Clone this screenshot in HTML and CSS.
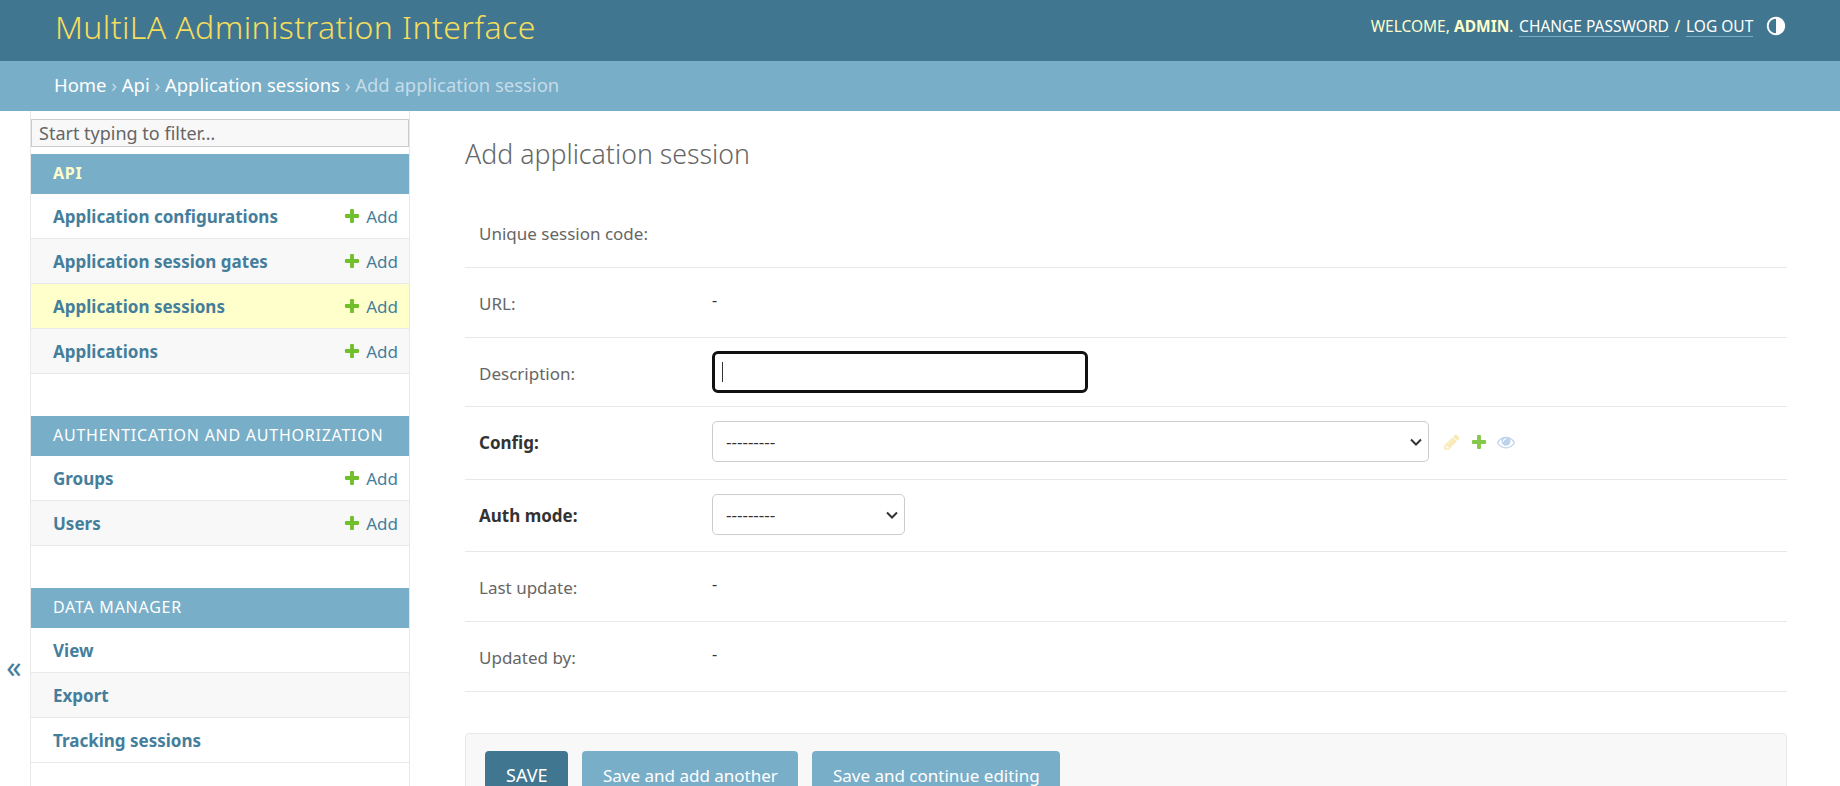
FILE: index.html
```html
<!DOCTYPE html>
<html>
<head>
    <meta charset="utf-8">
    <title>Add application session | MultiLA Administration Interface</title>
    <link rel="stylesheet" href="styles.css">
</head>
<body>
    <svg class="defs" width="0" height="0">
        <symbol id="i-add" viewBox="0 0 1792 1792"><path d="M1600 796v192q0 40-28 68t-68 28h-416v416q0 40-28 68t-68 28h-192q-40 0-68-28t-28-68v-416h-416q-40 0-68-28t-28-68v-192q0-40 28-68t68-28h416v-416q0-40 28-68t68-28h192q40 0 68 28t28 68v416h416q40 0 68 28t28 68z"/></symbol>
        <symbol id="i-change" viewBox="0 0 1792 1792"><path d="M491 1536l91-91-235-235-91 91v107h128v128h107zm523-928q0-22-22-22-10 0-17 7l-542 542q-7 7-7 17 0 22 22 22 10 0 17-7l542-542q7-7 7-17zm-54-192l416 416-832 832h-416v-416zm683 96q0 53-37 90l-166 166-416-416 166-165q36-38 90-38 53 0 91 38l235 234q37 39 37 91z"/></symbol>
        <symbol id="i-view" viewBox="0 0 1792 1792"><path d="M1664 960q-152-236-381-353 61 104 61 225 0 185-131.5 316.5t-316.5 131.5-316.5-131.5-131.5-316.5q0-121 61-225-229 117-381 353 133 205 333.5 326.5t434.5 121.5 434.5-121.5 333.5-326.5zm-720-384q0-20-14-34t-34-14q-125 0-214.5 89.5t-89.5 214.5q0 20 14 34t34 14 34-14 14-34q0-86 61-147t147-61q20 0 34-14t14-34zm848 384q0 34-20 69-140 230-376.5 368.5t-499.5 138.5-499.5-139-376.5-368q-20-35-20-69t20-69q140-229 376.5-368t499.5-139 499.5 139 376.5 368q20 35 20 69z"/></symbol>
    </svg>

    <header class="topbar">
        <h1 class="brand">MultiLA Administration Interface</h1>
        <div class="usertools">
            <span>Welcome, <strong>admin</strong>.</span>
            <a href="#">Change password</a>
            <span>/</span>
            <a href="#">Log out</a>
            <svg class="theme" viewBox="0 0 24 24"><path d="M12 22C6.477 22 2 17.523 2 12S6.477 2 12 2s10 4.477 10 10-4.477 10-10 10zm0-2V4a8 8 0 1 0 0 16z"/></svg>
        </div>
    </header>

    <nav class="crumbs">
        <a href="#">Home</a> › <a href="#">Api</a> › <a href="#">Application sessions</a> › Add application session
    </nav>

    <div class="main">
        <button class="toggle">«</button>
        <aside class="sidebar">
            <input class="filter" type="text" placeholder="Start typing to filter…">

            <section class="module">
                <h2 class="caption current">API</h2>
                <div class="item"><a class="model" href="#">Application configurations</a><a class="add" href="#"><svg class="icon"><use href="#i-add"/></svg>Add</a></div>
                <div class="item"><a class="model" href="#">Application session gates</a><a class="add" href="#"><svg class="icon"><use href="#i-add"/></svg>Add</a></div>
                <div class="item selected"><a class="model" href="#">Application sessions</a><a class="add" href="#"><svg class="icon"><use href="#i-add"/></svg>Add</a></div>
                <div class="item"><a class="model" href="#">Applications</a><a class="add" href="#"><svg class="icon"><use href="#i-add"/></svg>Add</a></div>
            </section>

            <section class="module">
                <h2 class="caption">Authentication and Authorization</h2>
                <div class="item"><a class="model" href="#">Groups</a><a class="add" href="#"><svg class="icon"><use href="#i-add"/></svg>Add</a></div>
                <div class="item"><a class="model" href="#">Users</a><a class="add" href="#"><svg class="icon"><use href="#i-add"/></svg>Add</a></div>
            </section>

            <section class="module">
                <h2 class="caption">Data Manager</h2>
                <div class="item"><a class="model" href="#">View</a></div>
                <div class="item"><a class="model" href="#">Export</a></div>
                <div class="item"><a class="model" href="#">Tracking sessions</a></div>
            </section>
        </aside>

        <main class="content">
            <h1 class="title">Add application session</h1>
            <form>
                <div class="form-row"><label>Unique session code:</label><div class="readonly"></div></div>
                <div class="form-row"><label>URL:</label><div class="readonly">-</div></div>
                <div class="form-row form-row-input">
                    <label>Description:</label>
                    <div class="input-wrap"><input class="text-input" type="text"><span class="caret"></span></div>
                </div>
                <div class="form-row form-row-config">
                    <label class="required">Config:</label>
                    <select class="wide"><option>---------</option></select>
                    <div class="related">
                        <svg class="icon pencil"><use href="#i-change"/></svg>
                        <svg class="icon plus"><use href="#i-add"/></svg>
                        <svg class="icon eye"><use href="#i-view"/></svg>
                    </div>
                </div>
                <div class="form-row form-row-select">
                    <label class="required">Auth mode:</label>
                    <select class="narrow"><option>---------</option></select>
                </div>
                <div class="form-row"><label>Last update:</label><div class="readonly">-</div></div>
                <div class="form-row"><label>Updated by:</label><div class="readonly">-</div></div>

                <div class="submit-row">
                    <button class="btn btn-default" type="button">SAVE</button>
                    <button class="btn" type="button">Save and add another</button>
                    <button class="btn" type="button">Save and continue editing</button>
                </div>
            </form>
        </main>
    </div>
</body>
</html>
```

FILE: styles.css
```css
* {
    box-sizing: border-box;
}
html, body {
    height: 100%;
}
body {
    margin: 0;
    display: flex;
    flex-direction: column;
    overflow: hidden;
    font-family: "Noto Sans", sans-serif;
    font-size: 16px;
    color: #333;
    background: #fff;
}
a {
    text-decoration: none;
}
.defs {
    position: absolute;
}
.icon {
    width: 18px;
    height: 18px;
    fill: currentColor;
}

/* header */
.topbar {
    flex: none;
    height: 61px;
    background: #417690;
    padding: 0 53px 0 55px;
    display: flex;
    justify-content: space-between;
    align-items: flex-start;
}
.brand {
    margin: 7px 0 0;
    font-size: 32px;
    font-weight: 300;
    letter-spacing: 0.4px;
    line-height: 40px;
    color: #f5dd5d;
}
.usertools {
    margin-top: 15px;
    display: flex;
    align-items: center;
    gap: 5.7px;
    font-size: 15.5px;
    line-height: 20px;
    text-transform: uppercase;
    color: #ffc;
}
.usertools a {
    color: #fff;
    border-bottom: 1px solid #79aec8;
}
.usertools strong {
    font-weight: 700;
}
.theme {
    width: 22px;
    height: 22px;
    margin-left: 6px;
    fill: #fff;
}
.crumbs {
    flex: none;
    height: 50px;
    background: #79aec8;
    padding: 0 54px;
    line-height: 48px;
    font-size: 18.45px;
    color: #c4dce8;
}
.crumbs a {
    color: #fff;
}

/* page */
.main {
    flex: 1;
    display: flex;
    min-height: 0;
}
.toggle {
    flex: none;
    width: 31px;
    padding: 436px 2px 0 0;
    border: 0;
    border-right: 1px solid #e8e8e8;
    background: #fff;
    color: #447e9b;
    font-family: inherit;
    font-size: 30px;
    line-height: 30px;
    display: block;
    text-align: center;
}
.sidebar {
    flex: none;
    width: 379px;
    border-right: 1px solid #e8e8e8;
    padding-top: 8px;
}
.filter {
    display: block;
    width: 100%;
    height: 28px;
    margin-bottom: 7px;
    padding: 0 7px;
    border: 1px solid #ccc;
    background: #f8f8f8;
    font-family: inherit;
    font-size: 18px;
    color: #333;
}
.filter::placeholder {
    color: #666;
}
.module {
    margin-bottom: 42px;
}
.caption {
    margin: 0;
    height: 40px;
    padding: 0 22px;
    background: #79aec8;
    color: #fff;
    font-size: 16px;
    font-weight: 400;
    line-height: 38px;
    letter-spacing: 0.75px;
    text-transform: uppercase;
}
.caption.current {
    color: #ffc;
    font-weight: 700;
}
.item {
    height: 45px;
    padding: 0 11px 0 22px;
    border-bottom: 1px solid #e8e8e8;
    display: flex;
    justify-content: space-between;
    align-items: center;
}
.item:nth-of-type(even) {
    background: #f8f8f8;
}
.item.selected {
    background: #ffc;
}
.model {
    font-size: 17px;
    font-weight: 700;
    color: #447e9b;
}
.add {
    display: flex;
    align-items: center;
    gap: 5px;
    font-size: 17px;
    color: #447e9b;
}
.add .icon {
    color: #70bf2b;
}

/* form */
.content {
    flex: 1;
    min-width: 0;
    padding: 0 53px 0 55px;
}
.title {
    margin: 23px 0 0;
    height: 64px;
    font-size: 26.7px;
    font-weight: 300;
    line-height: 40px;
    color: #666;
}
.form-row {
    min-height: 70px;
    padding: 14px;
    border-bottom: 1px solid #e8e8e8;
    display: flex;
    align-items: center;
}
.form-row-input {
    min-height: 69px;
    padding: 13px 14px;
}
.form-row-config {
    padding-bottom: 17px;
}
.form-row-select {
    padding-bottom: 16px;
}
.form-row label {
    flex: none;
    width: 233px;
    margin-top: 2px;
    font-size: 17px;
    color: #666;
}
.form-row label.required {
    font-weight: 700;
    color: #333;
}
.readonly {
    font-size: 16px;
    margin-top: -5px;
}
.input-wrap {
    position: relative;
}
.text-input {
    display: block;
    width: 376px;
    height: 42px;
    padding: 0 8px;
    border: 0;
    border-radius: 6px;
    outline: 3px solid #111;
    outline-offset: -3px;
    font-family: inherit;
    font-size: 16px;
}
.caret {
    position: absolute;
    left: 10px;
    top: 11px;
    width: 1px;
    height: 20px;
    background: #333;
}
select {
    appearance: none;
    height: 41px;
    padding: 0 24px 0 13px;
    border: 1px solid #ccc;
    border-radius: 5px;
    background: #fff url("data:image/svg+xml,%3Csvg xmlns='http://www.w3.org/2000/svg' viewBox='0 0 12 8'%3E%3Cpath d='M1 1.5l5 5 5-5' fill='none' stroke='%23333' stroke-width='2'/%3E%3C/svg%3E") no-repeat right 6px center / 12px 8px;
    font-family: inherit;
    font-size: 17px;
    color: #333;
}
.wide {
    width: 717px;
}
.narrow {
    width: 193px;
}
.related {
    display: flex;
    align-items: center;
    gap: 9px;
    margin-left: 14px;
}
.pencil {
    color: #efb80b;
    opacity: 0.3;
}
.plus {
    color: #70bf2b;
    opacity: 0.85;
}
.eye {
    color: #2b70bf;
    opacity: 0.3;
}
.submit-row {
    margin-top: 41px;
    padding: 17px 19px;
    border: 1px solid #e8e8e8;
    border-radius: 4px;
    background: #f8f8f8;
    display: flex;
    gap: 14px;
}
.btn {
    height: 48px;
    padding: 0 20.5px;
    border: 0;
    border-radius: 4px;
    background: #79aec8;
    color: #fff;
    font-family: inherit;
    font-size: 17px;
}
.btn-default {
    padding: 0 21px;
    background: #417690;
    font-size: 18px;
}
```
